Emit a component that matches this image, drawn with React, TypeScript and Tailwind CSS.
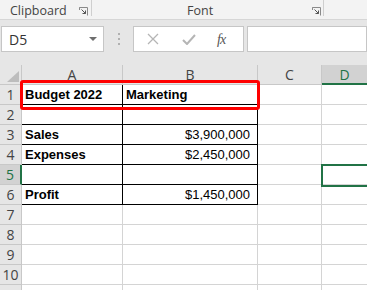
const ROWS = [
  { n: 1, a: 'Budget 2022', b: 'Marketing', bLeft: true },
  { n: 2 },
  { n: 3, a: 'Sales', b: '$3,900,000' },
  { n: 4, a: 'Expenses', b: '$2,450,000' },
  { n: 5 },
  { n: 6, a: 'Profit', b: '$1,450,000' },
  { n: 7 }, { n: 8 }, { n: 9 }, { n: 10 }, { n: 11 },
] as { n: number; a?: string; b?: string; bLeft?: boolean }[]

const uiFont = "font-['Open_Sans','Noto_Sans',sans-serif]"
const cellFont = "font-['Liberation_Sans',Arial,sans-serif]"

function Launcher() {
  return (
    <svg width="9" height="9" viewBox="0 0 9 9" className="shrink-0">
      <path d="M0.5 0.5H8.5V8.5" fill="none" stroke="#8a8a8a" />
      <path d="M0.5 0.5V3M0.5 0.5H3" fill="none" stroke="#8a8a8a" />
      <path d="M2.5 2.5L6.5 6.5M6.5 3.5V6.5H3.5" fill="none" stroke="#555" />
    </svg>
  )
}

export default function App() {
  return (
    <div className={`relative w-[367px] h-[290px] overflow-hidden bg-[#e6e6e6] ${uiFont}`}>
      {/* Ribbon group labels */}
      <div className="flex items-start h-[20px] bg-[#f3f3f3] border-b border-[#d6d6d6]">
        <div className="flex items-center w-[91px] h-[19px] pt-[4px] pl-[10px] pr-[3px]">
          <span className="text-[12.5px] text-[#444] leading-none">Clipboard</span>
          <span className="ml-auto"><Launcher /></span>
        </div>
        <div className="w-px h-[16px] bg-[#cfcfcf]" />
        <div className="flex items-center w-[231px] h-[19px] pt-[4px] pl-[95px] pr-[2px]">
          <span className="text-[12.5px] text-[#444] leading-none">Font</span>
          <span className="ml-auto"><Launcher /></span>
        </div>
        <div className="w-px h-[16px] bg-[#cfcfcf]" />
      </div>

      {/* Name box + formula bar */}
      <div className="flex items-center h-[45px] pt-[1px] pb-[8px] pl-[1px]">
        <div className="flex items-center w-[103px] h-[26px] bg-white border border-[#c6c6c6] pl-[7px] pr-[6px]">
          <span className="text-[14px] text-[#333]">D5</span>
          <svg width="8" height="4" viewBox="0 0 8 4" className="ml-auto">
            <path d="M0 0H8L4 4Z" fill="#6e6e6e" />
          </svg>
        </div>
        <div className="flex flex-col gap-[3px] ml-[14px] mr-[13px]">
          <div className="w-[2px] h-[2px] bg-[#b0b0b0]" />
          <div className="w-[2px] h-[2px] bg-[#b0b0b0]" />
          <div className="w-[2px] h-[2px] bg-[#b0b0b0]" />
        </div>
        <div className="flex items-center w-[111px] h-[26px] bg-white border border-[#c6c6c6]">
          <svg width="12" height="12" viewBox="0 0 12 12" className="ml-[13px]">
            <path d="M1 1L11 11M11 1L1 11" stroke="#b5b5b5" strokeWidth="1.3" />
          </svg>
          <svg width="14" height="11" viewBox="0 0 14 11" className="ml-[23px]">
            <path d="M1 6L5 10L13 1" fill="none" stroke="#b5b5b5" strokeWidth="2" />
          </svg>
          <span className="ml-[21px] text-[14px] italic text-[#555] font-['Liberation_Serif',serif] tracking-[-1px]">fx</span>
        </div>
        <div className="flex-1 h-[26px] ml-[3px] bg-white border border-[#c6c6c6]" />
      </div>

      {/* Sheet */}
      <div className="flex h-[20px]">
        <div className="relative w-[22px] border-r border-b border-[#c8c8c8]">
          <svg width="12" height="11" viewBox="0 0 12 11" className="absolute right-[2px] bottom-[2px]">
            <path d="M12 0V11H0Z" fill="#bdbdbd" />
          </svg>
        </div>
        <div className="w-[101px] flex items-center justify-center border-r border-b border-[#c8c8c8] text-[14px] text-[#444]">A</div>
        <div className="w-[135px] flex items-center justify-center border-r border-b border-[#c8c8c8] text-[14px] text-[#444]">B</div>
        <div className="w-[64px] flex items-center justify-center border-r border-b border-[#c8c8c8] text-[14px] text-[#444]">C</div>
        <div className="flex-1 flex items-center justify-center bg-[#d2d2d2] border-b-2 border-[#217346] text-[14px] text-[#217346]">D</div>
      </div>

      {ROWS.map(r => {
        const inTable = r.n <= 6
        const sel = r.n === 5
        return (
          <div key={r.n} className="flex h-[20px]">
            <div
              className={
                sel
                  ? 'w-[22px] flex items-center justify-center bg-[#d2d2d2] border-r-2 border-r-[#217346] border-b border-b-[#c8c8c8] text-[14px] text-[#217346]'
                  : 'w-[22px] flex items-center justify-center border-r border-b border-[#c8c8c8] text-[14px] text-[#444]'
              }
            >
              {r.n <= 10 ? r.n : ''}
            </div>
            <div
              className={`w-[101px] flex items-center pl-[3px] bg-white border-r border-b ${cellFont} text-[13px] font-bold text-black ${
                inTable ? 'border-black' : 'border-[#d4d4d4]'
              }`}
            >
              {r.a}
            </div>
            <div
              className={`w-[135px] flex items-center bg-white border-r border-b ${cellFont} text-[13px] text-black ${
                r.bLeft ? 'pl-[3px] font-bold' : 'justify-end pr-[7px]'
              } ${inTable ? 'border-black' : 'border-[#d4d4d4]'}`}
            >
              {r.b}
            </div>
            <div className="w-[64px] bg-white border-r border-b border-[#d4d4d4]" />
            <div className="flex-1 bg-white border-b border-[#d4d4d4]" />
          </div>
        )
      })}

      {/* Red highlight */}
      <div className="absolute left-[20px] top-[80px] w-[240px] h-[30px] border-[3px] border-[#ff0000] rounded-[3px]" />
      {/* Active cell D5 */}
      <div className="absolute left-[321px] top-[164px] w-[60px] h-[23px] border-2 border-[#217346]" />
    </div>
  )
}
